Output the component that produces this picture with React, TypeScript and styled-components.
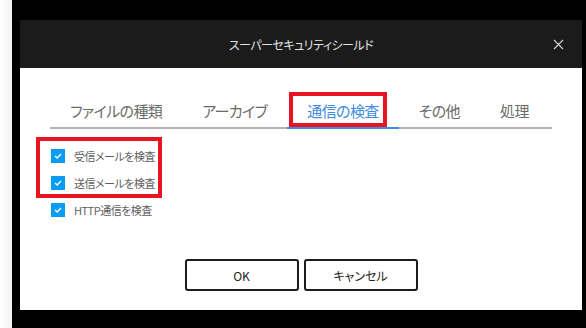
import { useState } from 'react';
import styled, { createGlobalStyle } from 'styled-components';

const GlobalStyle = createGlobalStyle`
    html, body {
        margin: 0;
        padding: 0;
        background: #000;
    }
    body {
        font-family: "Noto Sans CJK JP", "Noto Sans", sans-serif;
        font-feature-settings: "palt";
    }
`;

const Screen = styled.div`
    display: flex;
    width: 586px;
    height: 328px;
    overflow: hidden;
    background: #000;
`;

const SideStrip = styled.div`
    width: 12px;
    flex-shrink: 0;
    background: linear-gradient(to right, #ffffff, #f3f3f3);
`;

const Backdrop = styled.div`
    flex: 1;
    min-width: 0;
    padding: 20px 4px 18px 8px;
    display: flex;
`;

const Dialog = styled.div`
    position: relative;
    flex: 1;
    min-width: 0;
    display: flex;
    flex-direction: column;
    background: #fff;
`;

const TitleBar = styled.div`
    height: 48px;
    flex-shrink: 0;
    background: #1b1b1b;
    display: flex;
    align-items: center;
    justify-content: center;
    position: relative;
`;

const Title = styled.span`
    color: #e2e2e2;
    font-size: 12px;
    letter-spacing: -0.5px;
`;

const CloseButton = styled.button`
    position: absolute;
    right: 17px;
    top: 17px;
    width: 14px;
    height: 14px;
    padding: 0;
    border: 0;
    background: transparent;
    display: flex;
    align-items: center;
    justify-content: center;
    cursor: pointer;
`;

const Body = styled.div`
    flex: 1;
    display: flex;
    flex-direction: column;
    padding: 28px 30px 19px;
`;

const TabList = styled.div`
    display: flex;
    border-bottom: 2px solid #b3b3b7;
`;

const Tab = styled.div<{ $active?: boolean }>`
    font-size: 15px;
    line-height: 22px;
    letter-spacing: -0.6px;
    padding: 4px 20px 5px;
    color: ${p => (p.$active ? '#3e8be0' : '#6b6b6b')};
    border-bottom: 2px solid ${p => (p.$active ? '#3d8de0' : 'transparent')};
    margin-bottom: -2px;
    cursor: pointer;
    white-space: nowrap;
`;

const Options = styled.div`
    display: flex;
    flex-direction: column;
    margin-top: 13px;
    padding-left: 1px;
`;

const OptionRow = styled.label`
    display: flex;
    align-items: center;
    gap: 9px;
    height: 27px;
    font-size: 11px;
    letter-spacing: -0.5px;
    color: #5e5e5e;
    cursor: pointer;
`;

const Box = styled.span<{ $checked: boolean }>`
    width: 14px;
    height: 14px;
    flex-shrink: 0;
    background: ${p => (p.$checked ? '#0a9cf3' : '#fff')};
    border: ${p => (p.$checked ? 'none' : '1px solid #888')};
    box-sizing: border-box;
    display: flex;
    align-items: center;
    justify-content: center;
`;

const Buttons = styled.div`
    margin-top: auto;
    display: flex;
    justify-content: center;
    gap: 5px;
`;

const Button = styled.button`
    width: 114px;
    height: 32px;
    border: 2px solid #1c1c1c;
    border-radius: 3px;
    background: #fff;
    color: #222;
    font-family: inherit;
    font-feature-settings: "palt";
    font-size: 12px;
    cursor: pointer;
`;

const Highlight = styled.div<{ $x: number; $y: number; $w: number; $h: number }>`
    position: absolute;
    left: ${p => p.$x}px;
    top: ${p => p.$y}px;
    width: ${p => p.$w}px;
    height: ${p => p.$h}px;
    border: 4px solid #e8141f;
    box-sizing: border-box;
    pointer-events: none;
`;

const tabs = ['ファイルの種類', 'アーカイブ', '通信の検査', 'その他', '処理'];

const App = () => {
    const [active, setActive] = useState(2);
    const [checks, setChecks] = useState([true, true, true]);
    const labels = ['受信メールを検査', '送信メールを検査', 'HTTP通信を検査'];

    const toggle = (i: number) => setChecks(c => c.map((v, j) => (j === i ? !v : v)));

    return (
        <Screen>
            <GlobalStyle />
            <SideStrip />
            <Backdrop>
                <Dialog>
                    <TitleBar>
                        <Title>スーパーセキュリティシールド</Title>
                        <CloseButton aria-label="close">
                            <svg width="11" height="11" viewBox="0 0 11 11">
                                <path d="M1 1 L10 10 M10 1 L1 10" stroke="#cfcfcf" strokeWidth="1.2" />
                            </svg>
                        </CloseButton>
                    </TitleBar>
                    <Body>
                        <TabList>
                            {tabs.map((t, i) => (
                                <Tab key={t} $active={i === active} onClick={() => setActive(i)}>
                                    {t}
                                </Tab>
                            ))}
                        </TabList>
                        <Options>
                            {labels.map((l, i) => (
                                <OptionRow key={l} onClick={() => toggle(i)}>
                                    <Box $checked={checks[i]}>
                                        {checks[i] && (
                                            <svg width="8" height="6" viewBox="0 0 8 6">
                                                <path d="M1 3 L3.2 5 L7 1" stroke="#fff" strokeWidth="1.4" fill="none" />
                                            </svg>
                                        )}
                                    </Box>
                                    {l}
                                </OptionRow>
                            ))}
                        </Options>
                        <Buttons>
                            <Button>OK</Button>
                            <Button>キャンセル</Button>
                        </Buttons>
                    </Body>
                    <Highlight $x={269} $y={72} $w={98} $h={35} />
                    <Highlight $x={16} $y={117} $w={126} $h={61} />
                </Dialog>
            </Backdrop>
        </Screen>
    );
};

export default App;
